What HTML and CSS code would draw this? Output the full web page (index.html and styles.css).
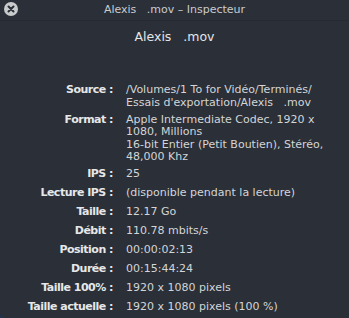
FILE: index.html
```html
<!DOCTYPE html>
<html lang="fr">
<head>
<meta charset="utf-8">
<link rel="stylesheet" href="styles.css">
</head>
<body>
<div class="window">
  <div class="titlebar">
    <span class="close"><svg width="14" height="14" viewBox="0 0 14 14"><circle cx="7" cy="7" r="7" fill="#c9cbcd"/><path d="M4.5 4.5 L9.5 9.5 M9.5 4.5 L4.5 9.5" stroke="#2b3038" stroke-width="2" stroke-linecap="round"/></svg></span>
    <span class="title">Alexis&nbsp;&nbsp;&nbsp;.mov – Inspecteur</span>
  </div>
  <div class="heading">Alexis&nbsp;&nbsp;&nbsp;.mov</div>
  <div class="info">
    <div class="lbl multi src">Source :</div>
    <div class="val multi src">/Volumes/1 To for Vidéo/Terminés/<br>Essais d'exportation/Alexis&nbsp;&nbsp;&nbsp;.mov</div>
    <div class="lbl multi fmt">Format :</div>
    <div class="val multi fmt">Apple Intermediate Codec, 1920 x<br>1080, Millions<br>16-bit Entier (Petit Boutien), Stéréo,<br>48,000 Khz</div>
    <div class="lbl">IPS :</div>
    <div class="val">25</div>
    <div class="lbl">Lecture IPS :</div>
    <div class="val">(disponible pendant la lecture)</div>
    <div class="lbl">Taille :</div>
    <div class="val">12.17 Go</div>
    <div class="lbl">Débit :</div>
    <div class="val">110.78 mbits/s</div>
    <div class="lbl">Position :</div>
    <div class="val">00:00:02:13</div>
    <div class="lbl">Durée :</div>
    <div class="val">00:15:44:24</div>
    <div class="lbl">Taille 100% :</div>
    <div class="val">1920 x 1080 pixels</div>
    <div class="lbl">Taille actuelle :</div>
    <div class="val">1920 x 1080 pixels (100 %)</div>
  </div>
</div>
</body>
</html>
```
FILE: styles.css
```css
html, body {
  margin: 0;
  padding: 0;
  background: #1f3550;
}
.window {
  width: 349px;
  height: 318px;
  background: #2b3038;
  border-bottom-left-radius: 5px;
  font-family: "DejaVu Sans", sans-serif;
  font-size: 11px;
  color: #d3d5d7;
  overflow: hidden;
}
.titlebar {
  position: relative;
  height: 20px;
  border-bottom: 1px solid #262a31;
  display: flex;
  align-items: center;
  justify-content: center;
}
.close {
  position: absolute;
  left: 4px;
  top: 2px;
  width: 14px;
  height: 14px;
}
.close svg { display: block; }
.title {
  color: #c9cbce;
  font-size: 11px;
  line-height: 14px;
  margin-top: 0;
}
.heading {
  text-align: center;
  font-size: 12.5px;
  line-height: 15px;
  color: #e4e6e8;
  padding-top: 8px;
  height: 53px;
}
.info {
  display: grid;
  grid-template-columns: 113px 1fr;
  column-gap: 13px;
}
.lbl {
  text-align: right;
  font-weight: bold;
  color: #e6e7e9;
  line-height: 19px;
  letter-spacing: -0.5px;
  white-space: nowrap;
}
.val {
  line-height: 19px;
  white-space: nowrap;
}
.multi {
  line-height: 12.5px;
}
.src {
  padding-top: 2px;
  padding-bottom: 2.5px;
}
.fmt {
  padding-top: 2px;
  padding-bottom: 0;
}
```
